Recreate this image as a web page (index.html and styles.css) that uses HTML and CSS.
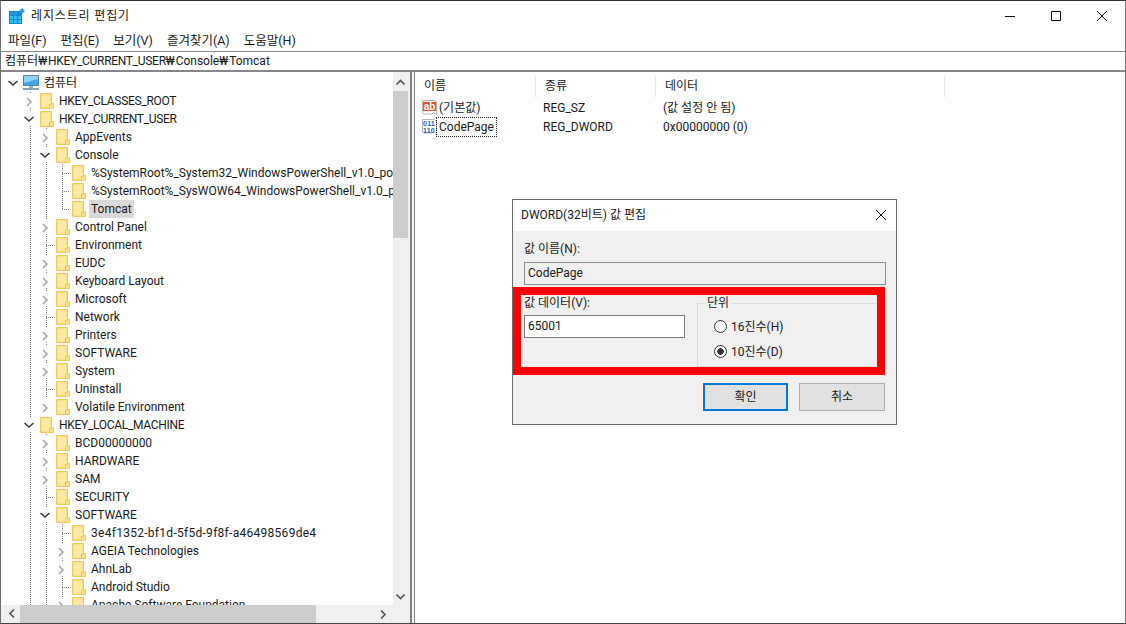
FILE: index.html
```html
<!DOCTYPE html>
<html lang="ko">
<head>
<meta charset="utf-8">
<title>레지스트리 편집기</title>
<link rel="stylesheet" href="styles.css">
</head>
<body>
<svg class="defs" width="0" height="0">
  <defs>
    <symbol id="folder" viewBox="0 0 14 16">
      <path d="M.5.500H11.500V10.500H13.500V15.500H.5Z" fill="#fde08a" stroke="#edc95c"/>
      <path d="M2 2H10V14H2Z" fill="#ffe9a6"/>
      <path d="M9.500 15V11.500H11.500" fill="none" stroke="#edc95c"/>
    </symbol>
    <symbol id="right" viewBox="0 0 16 18"><path d="M6 6l4 4-4 4" fill="none" stroke="#a6a6a6" stroke-width="1.600"/></symbol>
    <symbol id="down" viewBox="0 0 16 18"><path d="M3.500 7l4.500 4 4.500-4" fill="none" stroke="#404040" stroke-width="1.600"/></symbol>
  </defs>
</svg>
<div class="window">
  <header class="titlebar">
    <svg class="appicon" width="16" height="16" viewBox="0 0 16 16">
      <path d="M0 3h13v13H0z" fill="#1688cf"/>
      <path d="M1 8h3v3H1zM5 8h3v3H5zM9 8h3v3H9zM1 12h3v3H1zM5 12h3v3H5zM9 12h3v3H9z" fill="#36bdf2"/>
      <path d="M1 4h3v3H1zM5 4h3v3H5z" fill="#1c9ee0"/>
      <path d="M13 0l3 3-3 3-3-3z" fill="#2f9fdc"/>
    </svg>
    <span class="apptitle">레지스트리 편집기</span>
    <div class="winbtns">
      <svg width="10" height="10" viewBox="0 0 10 10"><path d="M0 5.500h10" stroke="#111"/></svg>
      <svg width="10" height="10" viewBox="0 0 10 10"><path d="M.5.500h9v9h-9z" fill="none" stroke="#111"/></svg>
      <svg width="10" height="10" viewBox="0 0 10 10"><path d="M0 0l10 10M10 0L0 10" stroke="#111"/></svg>
    </div>
  </header>
  <nav class="menubar">
    <span>파일(F)</span><span>편집(E)</span><span>보기(V)</span><span>즐겨찾기(A)</span><span>도움말(H)</span>
  </nav>
  <div class="address">컴퓨터<span class="won">₩</span><span class="caps">HKEY_CURRENT_USER</span><span class="won">₩</span>Console<span class="won">₩</span>Tomcat</div>
  <main class="panes">
    <section class="treepane">
      <div class="treeclip">
        <div class="tree">
          <div class="row"><i class="exp"><svg><use href="#down"/></svg></i><svg class="pc" width="18" height="18" viewBox="0 0 18 18"><path d="M1.500 1.500h15v10h-15z" fill="#3fa9e6" stroke="#5f7f95"/><path d="M2 2h14v3L2 9z" fill="#8fd3f7"/><path d="M7 12h4v2H7z" fill="#9fb4c2"/><path d="M1 15h16" stroke="#8aa0ae" stroke-width="2"/></svg><span class="lbl root">컴퓨터</span></div>

          <div class="row"><i class="g"></i><i class="exp v"><svg><use href="#right"/></svg></i><svg class="fd"><use href="#folder"/></svg><span class="lbl caps">HKEY_CLASSES_ROOT</span></div>
          <div class="row"><i class="g"></i><i class="exp v"><svg><use href="#down"/></svg></i><svg class="fd"><use href="#folder"/></svg><span class="lbl caps">HKEY_CURRENT_USER</span></div>
          <div class="row"><i class="g"></i><i class="g"></i><i class="exp v"><svg><use href="#right"/></svg></i><svg class="fd"><use href="#folder"/></svg><span class="lbl">AppEvents</span></div>
          <div class="row"><i class="g"></i><i class="g"></i><i class="exp v"><svg><use href="#down"/></svg></i><svg class="fd"><use href="#folder"/></svg><span class="lbl">Console</span></div>
          <div class="row"><i class="g"></i><i class="g"></i><i class="g"></i><i class="leaf"></i><svg class="fd"><use href="#folder"/></svg><span class="lbl">%SystemRoot%_System32_WindowsPowerShell_v1.0_powershell.exe</span></div>
          <div class="row"><i class="g"></i><i class="g"></i><i class="g"></i><i class="leaf"></i><svg class="fd"><use href="#folder"/></svg><span class="lbl">%SystemRoot%_SysWOW64_WindowsPowerShell_v1.0_powershell.exe</span></div>
          <div class="row"><i class="g"></i><i class="g"></i><i class="g"></i><i class="leaf last"></i><svg class="fd"><use href="#folder"/></svg><span class="lbl sel">Tomcat</span></div>
          <div class="row"><i class="g"></i><i class="g"></i><i class="exp v"><svg><use href="#right"/></svg></i><svg class="fd"><use href="#folder"/></svg><span class="lbl">Control Panel</span></div>
          <div class="row"><i class="g"></i><i class="g"></i><i class="leaf"></i><svg class="fd"><use href="#folder"/></svg><span class="lbl">Environment</span></div>
          <div class="row"><i class="g"></i><i class="g"></i><i class="exp v"><svg><use href="#right"/></svg></i><svg class="fd"><use href="#folder"/></svg><span class="lbl">EUDC</span></div>
          <div class="row"><i class="g"></i><i class="g"></i><i class="exp v"><svg><use href="#right"/></svg></i><svg class="fd"><use href="#folder"/></svg><span class="lbl">Keyboard Layout</span></div>
          <div class="row"><i class="g"></i><i class="g"></i><i class="exp v"><svg><use href="#right"/></svg></i><svg class="fd"><use href="#folder"/></svg><span class="lbl">Microsoft</span></div>
          <div class="row"><i class="g"></i><i class="g"></i><i class="leaf"></i><svg class="fd"><use href="#folder"/></svg><span class="lbl">Network</span></div>
          <div class="row"><i class="g"></i><i class="g"></i><i class="exp v"><svg><use href="#right"/></svg></i><svg class="fd"><use href="#folder"/></svg><span class="lbl">Printers</span></div>
          <div class="row"><i class="g"></i><i class="g"></i><i class="exp v"><svg><use href="#right"/></svg></i><svg class="fd"><use href="#folder"/></svg><span class="lbl">SOFTWARE</span></div>
          <div class="row"><i class="g"></i><i class="g"></i><i class="exp v"><svg><use href="#right"/></svg></i><svg class="fd"><use href="#folder"/></svg><span class="lbl">System</span></div>
          <div class="row"><i class="g"></i><i class="g"></i><i class="leaf"></i><svg class="fd"><use href="#folder"/></svg><span class="lbl">Uninstall</span></div>
          <div class="row"><i class="g"></i><i class="g"></i><i class="exp"><svg><use href="#right"/></svg></i><svg class="fd"><use href="#folder"/></svg><span class="lbl">Volatile Environment</span></div>
          <div class="row"><i class="g"></i><i class="exp v"><svg><use href="#down"/></svg></i><svg class="fd"><use href="#folder"/></svg><span class="lbl caps">HKEY_LOCAL_MACHINE</span></div>
          <div class="row"><i class="g"></i><i class="g"></i><i class="exp v"><svg><use href="#right"/></svg></i><svg class="fd"><use href="#folder"/></svg><span class="lbl">BCD00000000</span></div>
          <div class="row"><i class="g"></i><i class="g"></i><i class="exp v"><svg><use href="#right"/></svg></i><svg class="fd"><use href="#folder"/></svg><span class="lbl">HARDWARE</span></div>
          <div class="row"><i class="g"></i><i class="g"></i><i class="exp v"><svg><use href="#right"/></svg></i><svg class="fd"><use href="#folder"/></svg><span class="lbl">SAM</span></div>
          <div class="row"><i class="g"></i><i class="g"></i><i class="leaf"></i><svg class="fd"><use href="#folder"/></svg><span class="lbl">SECURITY</span></div>
          <div class="row"><i class="g"></i><i class="g"></i><i class="exp v"><svg><use href="#down"/></svg></i><svg class="fd"><use href="#folder"/></svg><span class="lbl">SOFTWARE</span></div>
          <div class="row"><i class="g"></i><i class="g"></i><i class="g"></i><i class="leaf"></i><svg class="fd"><use href="#folder"/></svg><span class="lbl hex">3e4f1352-bf1d-5f5d-9f8f-a46498569de4</span></div>
          <div class="row"><i class="g"></i><i class="g"></i><i class="g"></i><i class="exp v"><svg><use href="#right"/></svg></i><svg class="fd"><use href="#folder"/></svg><span class="lbl">AGEIA Technologies</span></div>
          <div class="row"><i class="g"></i><i class="g"></i><i class="g"></i><i class="exp v"><svg><use href="#right"/></svg></i><svg class="fd"><use href="#folder"/></svg><span class="lbl">AhnLab</span></div>
          <div class="row"><i class="g"></i><i class="g"></i><i class="g"></i><i class="leaf"></i><svg class="fd"><use href="#folder"/></svg><span class="lbl">Android Studio</span></div>
          <div class="row"><i class="g"></i><i class="g"></i><i class="g"></i><i class="exp v"><svg><use href="#right"/></svg></i><svg class="fd"><use href="#folder"/></svg><span class="lbl">Apache Software Foundation</span></div>
        </div>
        <div class="vscroll">
          <svg class="arrow up" width="15" height="17" viewBox="0 0 15 17"><path d="M3.500 10.500l4-4 4 4" fill="none" stroke="#505050" stroke-width="1.600"/></svg>
          <div class="vthumb"></div>
          <svg class="arrow end" width="15" height="17" viewBox="0 0 15 17"><path d="M3.500 6.500l4 4 4-4" fill="none" stroke="#505050" stroke-width="1.600"/></svg>
        </div>
      </div>
      <div class="hscroll">
        <svg class="arrow" width="19" height="17" viewBox="0 0 19 17"><path d="M13 4.500l-4 4 4 4" fill="none" stroke="#505050" stroke-width="1.600"/></svg>
        <div class="hthumb"></div>
        <svg class="arrow end" width="32" height="17" viewBox="0 0 32 17"><path d="M5 4.500l4 4-4 4" fill="none" stroke="#505050" stroke-width="1.600"/></svg>
      </div>
    </section>
    <div class="splitter"></div>
    <section class="listpane">
      <div class="listhead">
        <span class="c1">이름</span><span class="c2">종류</span><span class="c3">데이터</span>
      </div>
      <div class="listrow">
        <svg class="regicon" width="15" height="16" viewBox="0 0 15 16"><path d="M.5.500h12l2 2v12l-3-1.500-3 1.500-2.500-1.500-2.500 1.500-3-1.500z" fill="#fff" stroke="#b5b5b5"/><rect x="1" y="2" width="13" height="9" fill="#d9532c"/><text x="7.500" y="9.500" class="abtxt">ab</text></svg>
        <span class="name">(기본값)</span><span class="type">REG_SZ</span><span class="data">(값 설정 안 됨)</span>
      </div>
      <div class="listrow">
        <svg class="regicon" width="15" height="16" viewBox="0 0 15 16"><path d="M.5.500h12l2 2v12l-3-1.500-3 1.500-2.500-1.500-2.500 1.500-3-1.500z" fill="#fff" stroke="#b5b5b5"/><text x="7" y="7" class="bintxt">011</text><text x="7" y="13.500" class="bintxt">110</text></svg>
        <span class="name"><span class="focus">CodePage</span></span><span class="type">REG_DWORD</span><span class="data">0x00000000 (0)</span>
      </div>
    </section>
  </main>
  <div class="dialog">
    <div class="dlgtitle">
      <span>DWORD(32비트) 값 편집</span>
      <svg width="12" height="12" viewBox="0 0 12 12"><path d="M1 1l10 10M11 1L1 11" stroke="#111"/></svg>
    </div>
    <div class="dlgbody">
      <div class="dlglabel">값 이름(N):</div>
      <div class="field readonly">CodePage</div>
      <div class="dlgcols">
        <div class="datacol">
          <div class="dlglabel">값 데이터(V):</div>
          <div class="field">65001</div>
        </div>
        <div class="unit">
          <div class="unitlegend">단위</div>
          <div class="radio first"><i class="dot"></i>16진수(H)</div>
          <div class="radio"><i class="dot on"></i>10진수(D)</div>
        </div>
      </div>
      <div class="dlgbtns">
        <div class="btn default">확인</div>
        <div class="btn">취소</div>
      </div>
    </div>
    <div class="redbox"></div>
  </div>
</div>
</body>
</html>
```
FILE: styles.css
```css
* { box-sizing: border-box; }
html, body { margin: 0; padding: 0; background: #fff; }
body { font: 12px/18px Roboto, "Noto Sans CJK KR", sans-serif; color: #1a1a1a; overflow: hidden; }
.defs { position: absolute; }
.window { position: relative; width: 1126px; height: 624px; display: flex; flex-direction: column; border: 1px solid #6f6f6f; border-top-color: #333; border-bottom-color: #444; background: #fff; overflow: hidden; }

.titlebar { height: 29px; flex: none; display: flex; align-items: center; padding-left: 8px; }
.appicon { margin-right: 6px; margin-top: 1px; }
.apptitle { font-size: 12px; letter-spacing: .85px; }
.winbtns { margin-left: auto; display: flex; }
.winbtns svg { width: 10px; height: 10px; margin: 0 18px; }

.menubar { height: 21px; flex: none; display: flex; align-items: center; gap: 14px; padding-left: 7px; font-size: 12.5px; }

.address { height: 21px; flex: none; border-top: 1px solid #8a8a8a; border-bottom: 2px solid #85858a; padding: 0 0 0 4px; line-height: 18px; white-space: nowrap; }
.won { letter-spacing: 1px; }
.caps { letter-spacing: -.3px; }

.panes { flex: 1; min-height: 0; display: flex; }
.treepane { width: 407px; flex: none; display: flex; flex-direction: column; }
.treeclip { flex: 1; min-height: 0; display: flex; }
.tree { flex: 1; min-width: 0; overflow: hidden; padding-top: 2px; }
.row { height: 18px; display: flex; align-items: stretch; white-space: nowrap; padding-left: 4px; }
.row > i { width: 16px; flex: none; display: block; }
.row > i.g { background: repeating-linear-gradient(#808080 0 1px, transparent 1px 2px) 9px 0 / 1px 100% no-repeat; }
.row > i.g:first-child { background: none; }
.row > i.exp svg { width: 16px; height: 18px; display: block; }
.row > i.exp.v { background: repeating-linear-gradient(#808080 0 1px, transparent 1px 2px) 9px 0 / 1px 2px no-repeat, repeating-linear-gradient(#808080 0 1px, transparent 1px 2px) 9px 16px / 1px 2px no-repeat; }
.row > i.leaf { background: repeating-linear-gradient(#808080 0 1px, transparent 1px 2px) 9px 0 / 1px 100% no-repeat, repeating-linear-gradient(90deg, #808080 0 1px, transparent 1px 2px) 9px 9px / 7px 1px no-repeat; }
.row > i.leaf.last { background: repeating-linear-gradient(#808080 0 1px, transparent 1px 2px) 9px 0 / 1px 9px no-repeat, repeating-linear-gradient(90deg, #808080 0 1px, transparent 1px 2px) 9px 9px / 7px 1px no-repeat; }
.pc { flex: none; margin-left: 1px; }
.fd { width: 14px; height: 16px; flex: none; margin: 1px 0 0 3px; }
.lbl { padding: 0 2px; margin-left: 3px; line-height: 18px; height: 18px; }
.lbl.root { margin-left: 2px; }
.lbl.sel { background: #d9d9d9; }
.lbl.hex { letter-spacing: .28px; }

.vscroll { width: 15px; flex: none; background: #f0f0f0; display: flex; flex-direction: column; }
.vthumb { height: 147px; background: #cdcdcd; flex: none; }
.arrow { display: block; flex: none; }
.arrow.up { margin-top: 2px; }
.arrow.end { margin: auto 0 0 auto; }
.hscroll { height: 18px; flex: none; background: #f0f0f0; display: flex; }
.hthumb { width: 296px; background: #cdcdcd; }

.splitter { width: 7px; flex: none; background: linear-gradient(90deg, #f0f0f0 0 2px, #808080 2px 4px, #f8f8f8 4px 6px, #808080 6px 7px); }
.listpane { flex: 1; min-width: 0; padding-top: 1px; }
.listhead { height: 25px; display: flex; align-items: center; padding-top: 2px; }
.listhead span { height: 21px; line-height: 20px; border-right: 1px solid #e5e5e5; padding-left: 9px; }
.c1 { width: 121px; } .c2 { width: 120px; } .c3 { width: 289px; }
.listrow { height: 19px; display: grid; grid-template-columns: 17px 104px 120px 1fr; align-items: center; padding-left: 7px; }
.regicon { display: block; }
.abtxt { font: bold 10px "Liberation Sans", sans-serif; fill: #fff; text-anchor: middle; }
.bintxt { font: bold 7px "Liberation Sans", sans-serif; fill: #2b55c9; text-anchor: middle; letter-spacing: .2px; }
.focus { display: inline-block; outline: 1px dotted #222; margin-left: -2px; padding: 0 2px; height: 18px; }

.dialog { position: absolute; left: 511px; top: 198px; width: 385px; height: 226px; background: #f0f0f0; border: 1px solid #6e6e6e; }
.dlgtitle { height: 31px; background: #fff; display: flex; align-items: center; justify-content: space-between; padding: 0 9px 2px 8px; }
.dlgbody { padding: 9px 10px 0 11px; }
.dlglabel { height: 18px; line-height: 18px; }
.field { height: 23px; border: 1px solid #7a7a7a; background: #fff; padding-left: 3px; line-height: 20px; }
.readonly { background: #f0f0f0; margin-top: 4px; border-color: #8c8c8c; }
.dlgcols { display: flex; margin-top: 9px; }
.datacol { width: 161px; flex: none; }
.datacol .field { margin-top: 3px; }
.unit { margin: 9px 0 0 12px; width: 188px; height: 64px; border: 1px solid #dcdcdc; position: relative; }
.unitlegend { position: absolute; left: 7px; top: -10px; padding: 0 2px; background: #f0f0f0; line-height: 18px; }
.radio { display: flex; align-items: center; height: 25px; padding-left: 16px; gap: 4px; }
.radio.first { margin-top: 10px; }
.dot { width: 13px; height: 13px; border: 1px solid #333; border-radius: 50%; background: #fff; }
.dot.on { background: radial-gradient(circle, #333 0 3px, #fff 3.5px); }
.dlgbtns { display: flex; justify-content: flex-end; gap: 11px; margin-top: 16px; padding-right: 1px; }
.btn { width: 86px; height: 28px; background: #e1e1e1; border: 1px solid #adadad; text-align: center; line-height: 26px; }
.btn.default { width: 85px; border: 2px solid #0078d7; line-height: 24px; }
.redbox { position: absolute; left: 0; top: 87px; width: 372px; height: 88px; border: 8px solid #f00; }
```
